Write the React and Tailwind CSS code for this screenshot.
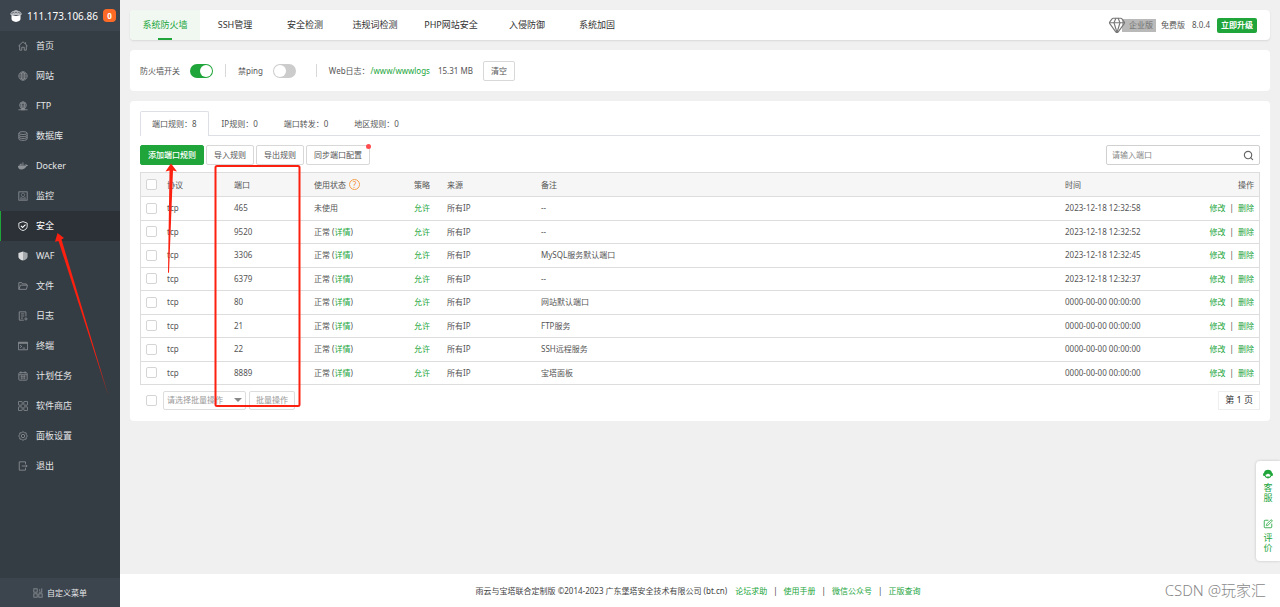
import { useState } from "react"
import { FaDocker } from "react-icons/fa"
import { Gem, Search, SquarePen } from "lucide-react"

const Icon = ({ children, ...props }) => (
  <svg viewBox="0 0 24 24" fill="none" stroke="currentColor" strokeWidth="2" {...props}>
    {children}
  </svg>
)

const HomeIcon = (props) => (
  <Icon {...props}>
    <path d="M1 12 12 2l11 10M4 10v12h5v-7h6v7h5V10M18 3v4" />
  </Icon>
)

const GlobeIcon = (props) => (
  <Icon {...props}>
    <circle cx="12" cy="12" r="10" />
    <ellipse cx="12" cy="12" rx="4.500" ry="10" />
    <path d="M2 12h20M4 7h16M4 17h16M12 2v20" strokeWidth="1.500" />
  </Icon>
)

const FtpIcon = (props) => (
  <Icon {...props}>
    <circle cx="12" cy="10" r="8" />
    <ellipse cx="12" cy="10" rx="3.500" ry="8" />
    <path d="M4 10h16M6 6h12M6 14h12" strokeWidth="1.500" />
    <path d="M1 21h22M8 18h8v3H8z" />
  </Icon>
)

const DatabaseIcon = (props) => (
  <Icon {...props}>
    <ellipse cx="12" cy="5" rx="10" ry="3.500" />
    <path d="M2 5v14c0 2 4 3.500 10 3.500S22 21 22 19V5M2 10c0 2 4 3.500 10 3.500S22 12 22 10M2 14.500C2 16.500 6 18 12 18s10-1.500 10-3.500" />
  </Icon>
)

const MonitorIcon = (props) => (
  <Icon {...props}>
    <rect x="2" y="2" width="20" height="20" />
    <path d="M5 19h14M6 15h3M15 15h3" />
    <path d="M12 5a4 4 0 1 0 .1 0M12 13v3" strokeWidth="1.500" />
  </Icon>
)

const ShieldIcon = (props) => (
  <Icon {...props}>
    <path d="M12 1.500 2 5v8c0 5 4 8 10 10 6-2 10-5 10-10V5z" />
    <path d="m7 11.500 4 4 7-7" strokeWidth="2.500" />
  </Icon>
)

const WafIcon = (props) => (
  <svg viewBox="0 0 24 24" {...props}>
    <path d="M12 1 1 5v8c0 5 4 8 11 10z" fill="#d8dadc" />
    <path d="M12 1l11 4v8c0 5-4 8-11 10z" fill="#a5a9ac" />
  </svg>
)

const FolderIcon = (props) => (
  <Icon {...props}>
    <path d="M2 20V4h7l2 3h9v3M2 20l4-10h17l-3 10z" />
  </Icon>
)

const LogIcon = (props) => (
  <Icon {...props}>
    <path d="M19 13V2H3v20h11M7 7h8M7 12h8M7 17h5" />
    <circle cx="19" cy="19" r="2.500" />
  </Icon>
)

const TerminalIcon = (props) => (
  <Icon {...props}>
    <path d="M1 3h22v18H1z" />
    <path d="M1 5h22" strokeWidth="3" />
    <path d="m5 10 4 3-4 3M11 17h6" />
  </Icon>
)

const CalendarIcon = (props) => (
  <Icon {...props}>
    <rect x="2" y="4" width="20" height="18" rx="2" />
    <path d="M2 9h20M7 1v5M17 1v5" />
    <path d="M6 13h12M6 17h12M9 10v10M15 10v10" strokeWidth="1.500" />
  </Icon>
)

const StoreIcon = (props) => (
  <Icon {...props}>
    <rect x="1" y="1" width="9" height="9" rx="1.500" />
    <rect x="14" y="1" width="9" height="9" rx="1.500" />
    <rect x="1" y="14" width="9" height="9" rx="1.500" />
    <rect x="14" y="14" width="9" height="9" rx="1.500" />
  </Icon>
)

const SettingIcon = (props) => (
  <Icon {...props}>
    <path d="M12 1.500 15 4l4.500.500.500 4.500 2.500 3-2.500 3-.500 4.500L15 20l-3 2.500L9 20l-4.500-.500L4 15l-2.500-3L4 9l.500-4.500L9 4z" />
    <circle cx="12" cy="12" r="4" />
  </Icon>
)

const ExitIcon = (props) => (
  <Icon {...props}>
    <path d="M18 7V2H3v20h15v-5M9 12h13M18.500 8.500 22 12l-3.500 3.500" />
  </Icon>
)

const CustomIcon = (props) => (
  <Icon {...props}>
    <rect x="2" y="2" width="8" height="8" />
    <rect x="2" y="14" width="8" height="8" />
    <rect x="14" y="14" width="8" height="8" />
    <path d="M14 10h8M21 1v9M16 3v4" />
  </Icon>
)

const LogoIcon = (props) => (
  <svg viewBox="0 0 24 24" {...props}>
    <path d="M0 8 4 3l8-3 8 3 4 5-2 2H2z" fill="#b9bdc1" />
    <path d="M3 7l5-3M21 7l-5-3M9 6l3-2 3 2" stroke="#4a5159" strokeWidth="1.500" fill="none" />
    <path d="M3 10l9 2 9-2v8c0 3-4 5-9 6-5-1-9-3-9-6z" fill="#ffffff" />
  </svg>
)

const HeadsetIcon = (props) => (
  <svg viewBox="0 0 24 24" fill="currentColor" {...props}>
    <path d="M12 2C7 2 3 5 2.500 9 1 10 0 11.500 0 13.500 0 16 2 17 4 17c1 3 4 5.500 8 5.500s7-2.500 8-5.500c2 0 4-1 4-3.500 0-2-1-3.500-2.500-4.500C21 5 17 2 12 2z" />
    <path d="M6 13.500c3 0 4.500-1 6-2.500 2 1.500 3.500 2.500 6 2.500 0 4-2.500 6-6 6s-6-2-6-6z" fill="#ffffff" />
    <path d="M9 18h6v3H9z" />
  </svg>
)

const menus = [
  { name: "首页", icon: HomeIcon },
  { name: "网站", icon: GlobeIcon },
  { name: "FTP", icon: FtpIcon },
  { name: "数据库", icon: DatabaseIcon },
  { name: "Docker", icon: FaDocker },
  { name: "监控", icon: MonitorIcon },
  { name: "安全", icon: ShieldIcon, active: true },
  { name: "WAF", icon: WafIcon },
  { name: "文件", icon: FolderIcon },
  { name: "日志", icon: LogIcon },
  { name: "终端", icon: TerminalIcon },
  { name: "计划任务", icon: CalendarIcon },
  { name: "软件商店", icon: StoreIcon },
  { name: "面板设置", icon: SettingIcon },
  { name: "退出", icon: ExitIcon },
]

const topTabs = [
  { name: "系统防火墙", width: "w-[70px]" },
  { name: "SSH管理", width: "w-[70px]" },
  { name: "安全检测", width: "w-[70px]" },
  { name: "违规词检测", width: "w-[70px]" },
  { name: "PHP网站安全", width: "w-[82px]" },
  { name: "入侵防御", width: "w-[70px]" },
  { name: "系统加固", width: "w-[70px]" },
]

const ruleTabs = ["端口规则：8", "IP规则：0", "端口转发：0", "地区规则：0"]

const rules = [
  { port: "465", used: false, remark: "--", time: "2023-12-18 12:32:58" },
  { port: "9520", used: true, remark: "--", time: "2023-12-18 12:32:52" },
  { port: "3306", used: true, remark: "MySQL服务默认端口", time: "2023-12-18 12:32:45" },
  { port: "6379", used: true, remark: "--", time: "2023-12-18 12:32:37" },
  { port: "80", used: true, remark: "网站默认端口", time: "0000-00-00 00:00:00" },
  { port: "21", used: true, remark: "FTP服务", time: "0000-00-00 00:00:00" },
  { port: "22", used: true, remark: "SSH远程服务", time: "0000-00-00 00:00:00" },
  { port: "8889", used: true, remark: "宝塔面板", time: "0000-00-00 00:00:00" },
]

const footerLinks = ["论坛求助", "使用手册", "微信公众号", "正版查询"]

const Checkbox = ({ label }) => (
  <input
    type="checkbox"
    aria-label={label}
    className="block size-[11px] shrink-0 appearance-none rounded-xs border border-[#d5d5d5] bg-white checked:bg-[#20a53a]"
  />
)

const Toggle = ({ id, checked, onChange }) => (
  <input
    id={id}
    type="checkbox"
    role="switch"
    checked={checked}
    onChange={(e) => onChange(e.target.checked)}
    className="flex h-[14px] w-[23px] appearance-none items-center rounded-full bg-[#ccc] px-px before:size-3 before:rounded-full before:bg-white checked:justify-end checked:bg-[#20a53a]"
  />
)

const OutlineButton = ({ children }) => (
  <button className="relative h-5 rounded-xs border border-[#d8d8d8] bg-white px-[7px] text-[#555]">{children}</button>
)

const Sidebar = () => (
  <aside className="flex w-[120px] shrink-0 flex-col bg-[#353d44] text-[#e4e6e8]">
    <div className="flex h-[31px] items-center bg-[#3c444d] pr-1 pl-[10px] text-[10px] text-white">
      <LogoIcon className="mr-[5px] size-3" />
      <span className="flex-1">111.173.106.86</span>
      <span className="flex size-[13px] items-center justify-center rounded-sm bg-[#ff6b26] text-[8px] font-bold">0</span>
    </div>
    <nav className="flex-1">
      {menus.map(({ name, icon: MenuIcon, active }) => (
        <a
          key={name}
          href="#"
          className={
            active
              ? "flex h-[30px] items-center gap-2 border-l border-[#20a53a] bg-[#2c3138] pl-[17px] text-[9px] text-white"
              : "flex h-[30px] items-center gap-2 border-l border-transparent pl-[17px] text-[9px]"
          }
        >
          <MenuIcon className={active ? "size-[10px]" : "size-[10px] text-[#8d9296]"} />
          {name}
        </a>
      ))}
    </nav>
    <button className="flex h-[29px] items-center justify-center gap-1 bg-[#3c444d] text-[8px]">
      <CustomIcon className="size-[10px] text-[#8d9296]" />
      自定义菜单
    </button>
  </aside>
)

const TopBar = () => (
  <header className="flex h-[30px] items-center rounded-sm bg-white pr-[13px] shadow-[0_1px_2px_rgba(0,0,0,0.1)]">
    <nav className="flex flex-1 self-stretch text-[9px] text-[#333]">
      {topTabs.map((tab, index) => (
        <a
          key={tab.name}
          href="#"
          className={`${tab.width} relative flex items-center justify-center whitespace-nowrap ${
            index === 0 ? "rounded-l-sm bg-[#f0f8f1] text-[#20a53a]" : ""
          }`}
        >
          {tab.name}
          {index === 0 && <span className="absolute bottom-0 h-0.5 w-[14px] bg-[#20a53a]" />}
        </a>
      ))}
    </nav>
    <div className="flex items-center text-[#555]">
      <Gem className="z-10 size-[18px] text-[#777]" strokeWidth={1.5} />
      <span className="-ml-1 flex h-[13px] items-center bg-[#b9b9b9] pr-[3px] pl-[7px] text-[#707070]">企业版</span>
      <span className="ml-[5px]">免费版</span>
      <span className="ml-[7px]">8.0.4</span>
      <button className="ml-[7px] h-[15px] rounded-xs bg-[#20a53a] px-1 font-bold text-white">立即升级</button>
    </div>
  </header>
)

const FirewallSwitches = () => {
  const [firewall, setFirewall] = useState(true)
  const [banPing, setBanPing] = useState(false)

  return (
    <section className="mt-[10px] flex h-[41px] items-center rounded-sm bg-white px-[10px] text-[#555]">
      <label htmlFor="firewall" className="mr-[10px]">防火墙开关</label>
      <Toggle id="firewall" checked={firewall} onChange={setFirewall} />
      <span className="mx-3 h-[13px] w-px bg-[#d8d8d8]" />
      <label htmlFor="ping" className="mr-[10px]">禁ping</label>
      <Toggle id="ping" checked={banPing} onChange={setBanPing} />
      <span className="mr-3 ml-5 h-[13px] w-px bg-[#d8d8d8]" />
      <span>Web日志：</span>
      <a href="#" className="mr-2 ml-px text-[#20a53a]">/www/wwwlogs</a>
      <span className="mr-[10px]">15.31 MB</span>
      <OutlineButton>清空</OutlineButton>
    </section>
  )
}

const RuleTable = () => (
  <div className="mt-[7px] border border-[#ddd]">
    <table className="h-[211px] w-full table-fixed border-separate border-spacing-0 text-left text-[#555] [&_td]:h-[23px] [&_td]:border-t [&_td]:border-[#ddd] [&_td]:px-[6px] [&_td]:py-0 [&_td:first-child]:pl-[5px] [&_td:last-child]:pr-[5px] [&_th]:h-[23px] [&_th]:px-[6px] [&_th]:py-0 [&_th]:font-normal [&_th:first-child]:pl-[5px] [&_th:last-child]:pr-[5px]">
      <thead className="bg-[#f6f6f6]">
        <tr>
          <th className="w-5"><Checkbox label="全选" /></th>
          <th className="w-[67px]">协议</th>
          <th className="w-20">端口</th>
          <th className="w-[100px]">
            <span className="flex items-center gap-[3px]">
              使用状态
              <button className="flex size-[11px] items-center justify-center rounded-full border border-[#f5a04a] text-[8px] leading-none text-[#f5903a]">?</button>
            </span>
          </th>
          <th className="w-[33px]">策略</th>
          <th className="w-[94px]">来源</th>
          <th>备注</th>
          <th className="w-[130px]">时间</th>
          <th className="w-[70px] text-right">操作</th>
        </tr>
      </thead>
      <tbody>
        {rules.map((rule) => (
          <tr key={rule.port}>
            <td><Checkbox label={rule.port} /></td>
            <td>tcp</td>
            <td>{rule.port}</td>
            <td>
              {rule.used ? (
                <>
                  正常 (<a href="#" className="text-[#20a53a]">详情</a>)
                </>
              ) : (
                "未使用"
              )}
            </td>
            <td><a href="#" className="text-[#20a53a]">允许</a></td>
            <td>所有IP</td>
            <td>{rule.remark}</td>
            <td className="whitespace-nowrap">{rule.time}</td>
            <td>
              <span className="flex justify-end gap-1">
                <a href="#" className="text-[#20a53a]">修改</a>
                <span>|</span>
                <a href="#" className="text-[#20a53a]">删除</a>
              </span>
            </td>
          </tr>
        ))}
      </tbody>
    </table>
  </div>
)

const PortRules = () => (
  <section className="mt-[10px] rounded-sm bg-white p-[10px]">
    <div className="flex h-[25px] border-b border-[#dcdfe6] text-[#555]">
      {ruleTabs.map((tab, index) => (
        <button
          key={tab}
          className={
            index === 0
              ? "-mb-px rounded-t-xs border border-b-0 border-[#dcdfe6] bg-white px-[11px]"
              : "px-[13px] pt-[2px]"
          }
        >
          {tab}
        </button>
      ))}
    </div>

    <div className="mt-[9px] flex justify-between">
      <div className="flex gap-[2px]">
        <button className="h-5 rounded-xs border border-[#20a53a] bg-[#20a53a] px-[7px] font-medium text-white">添加端口规则</button>
        <OutlineButton>导入规则</OutlineButton>
        <OutlineButton>导出规则</OutlineButton>
        <OutlineButton>
          同步端口配置
          <span className="absolute -top-[2px] -right-[2px] size-[5px] rounded-full bg-[#ff4d4f]" />
        </OutlineButton>
      </div>
      <div className="flex h-5 w-[154px] items-center rounded-xs border border-[#d0d0d0] px-[5px]">
        <input
          type="text"
          aria-label="搜索端口"
          placeholder="请输入端口"
          className="min-w-0 flex-1 outline-none placeholder:text-[#888]"
        />
        <Search className="size-[11px] text-[#666]" strokeWidth={2.5} />
      </div>
    </div>

    <RuleTable />

    <div className="mt-[5px] mb-px flex h-5 items-center pl-[6px] text-[#999]">
      <Checkbox label="选择全部规则" />
      <div className="relative ml-[6px]">
        <select aria-label="批量操作类型" className="block h-[19px] w-[83px] appearance-none rounded-xs border border-[#ddd] bg-white px-[3px]">
          <option>请选择批量操作</option>
        </select>
        <svg viewBox="0 0 8 4" className="pointer-events-none absolute top-[7px] right-1 h-1 w-2">
          <path d="M0 0h8L4 4z" fill="#888" />
        </svg>
      </div>
      <button className="ml-[3px] h-[19px] rounded-xs border border-[#ddd] px-[6px]">批量操作</button>
      <span className="ml-auto flex h-[19px] items-center border border-[#eee] px-[6px] text-[9px] text-[#333]">第 1 页</span>
    </div>
  </section>
)

const ServicePanel = () => (
  <aside className="absolute right-0 bottom-[46px] flex w-6 flex-col items-center rounded-l-sm bg-white py-2 text-[9px] leading-[10px] text-[#20a53a] shadow-[0_0_3px_rgba(0,0,0,0.2)]">
    <a href="#" className="flex flex-col items-center">
      <HeadsetIcon className="mb-1 size-[10px]" />
      <span className="w-[9px] break-all">客服</span>
    </a>
    <a href="#" className="mt-4 flex flex-col items-center">
      <SquarePen className="mb-1 size-[10px]" />
      <span className="w-[9px] break-all">评价</span>
    </a>
  </aside>
)

// Red frame and arrows that point at the menu entry, the add button and the port column
const Annotations = () => (
  <svg width="310" height="420" className="pointer-events-none absolute top-0 left-0 z-20">
    <rect x="215.500" y="166" width="84" height="240" rx="1.500" fill="none" stroke="#fb2010" strokeWidth="2" />
    <path d="M171 163.500l6 8-4-1-4 102.500-1-.500L169.500 170.500l-4 1z" fill="#fb2010" />
    <path d="M57.500 233l6.500 5-2.500 1.500L108.500 396 58.500 241l-3.500.800z" fill="#fb2010" />
  </svg>
)

const App = () => (
  <div
    className={`relative flex min-h-screen bg-[#f0f0f0] text-[8px] leading-3 [font-family:"Noto_Sans","Noto_Sans_CJK_SC",sans-serif]`}
  >
    <Sidebar />
    <div className="flex min-w-0 flex-1 flex-col">
      <main className="flex-1 p-[10px]">
        <TopBar />
        <FirewallSwitches />
        <PortRules />
      </main>
      <footer className="flex h-[33px] items-center justify-center bg-white pr-1 text-[#444]">
        <span className="mr-2">雨云与宝塔联合定制版 ©2014-2023 广东堡塔安全技术有限公司 (bt.cn)</span>
        {footerLinks.map((link, index) => (
          <span key={link} className="flex">
            {index > 0 && <span className="mx-[6px]">|</span>}
            <a href="#" className="text-[#20a53a]">{link}</a>
          </span>
        ))}
      </footer>
    </div>
    <ServicePanel />
    <span className="absolute right-[14px] bottom-2 text-[15px] leading-[18px] font-light text-[#888]">CSDN @玩家汇</span>
    <Annotations />
  </div>
)

export default App
